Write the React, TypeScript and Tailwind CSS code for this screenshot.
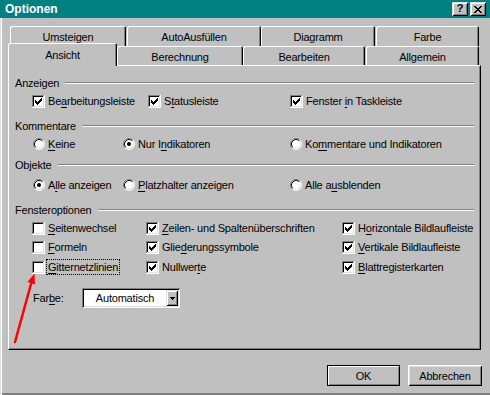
import React from "react";

function U({ children }: { children: React.ReactNode }) {
  return <span className="underline decoration-1 underline-offset-2">{children}</span>;
}

function Check({ checked }: { checked?: boolean }) {
  return (
    <svg width="13" height="13" className="shrink-0" shapeRendering="crispEdges">
      <rect x="0" y="0" width="13" height="13" fill="#fff" />
      <rect x="0" y="0" width="12" height="1" fill="#808080" />
      <rect x="0" y="0" width="1" height="12" fill="#808080" />
      <rect x="1" y="1" width="10" height="1" fill="#000" />
      <rect x="1" y="1" width="1" height="10" fill="#000" />
      <rect x="1" y="11" width="11" height="1" fill="#dfdfdf" />
      <rect x="11" y="1" width="1" height="11" fill="#dfdfdf" />
      {checked && (
        <g fill="#000">
          <rect x="9" y="3" width="1" height="1" />
          <rect x="8" y="4" width="2" height="1" />
          <rect x="3" y="5" width="1" height="1" />
          <rect x="7" y="5" width="3" height="1" />
          <rect x="3" y="6" width="2" height="1" />
          <rect x="6" y="6" width="3" height="1" />
          <rect x="3" y="7" width="5" height="1" />
          <rect x="4" y="8" width="3" height="1" />
          <rect x="5" y="9" width="1" height="1" />
        </g>
      )}
    </svg>
  );
}

function Radio({ checked }: { checked?: boolean }) {
  return (
    <svg width="12" height="12" className="shrink-0">
      <circle cx="6" cy="6" r="5" fill="#fff" />
      <path d="M2.11 9.89 A5.5 5.5 0 0 1 9.89 2.11" stroke="#808080" strokeWidth="1" fill="none" />
      <path d="M9.89 2.11 A5.5 5.5 0 0 1 2.11 9.89" stroke="#fff" strokeWidth="1" fill="none" />
      <path d="M2.82 9.18 A4.5 4.5 0 0 1 9.18 2.82" stroke="#000" strokeWidth="1" fill="none" />
      <path d="M9.18 2.82 A4.5 4.5 0 0 1 2.82 9.18" stroke="#dfdfdf" strokeWidth="1" fill="none" />
      {checked && <circle cx="6" cy="6" r="2" fill="#000" />}
    </svg>
  );
}

function Group({ label, className }: { label: React.ReactNode; className: string }) {
  return (
    <div className={"flex items-center h-[14px] " + className}>
      <span className="whitespace-nowrap">{label}</span>
      <div className="flex-1 ml-[6px] h-[2px] border-t border-t-[#808080] border-b border-b-white" />
    </div>
  );
}

function Tab({ label, className }: { label: string; className: string }) {
  return (
    <div
      className={
        "bg-[#c0c0c0] rounded-t-[2px] shadow-[inset_1px_1px_0_#fff,inset_-1px_0_0_#000,inset_-2px_0_0_#808080] text-center whitespace-nowrap " +
        className
      }
    >
      {label}
    </div>
  );
}

function TitleBtn({ children }: { children: React.ReactNode }) {
  return (
    <div className="w-[16px] h-[14px] bg-[#c0c0c0] shadow-[inset_1px_1px_0_#dfdfdf,inset_-1px_-1px_0_#000,inset_2px_2px_0_#fff,inset_-2px_-2px_0_#808080] flex items-center justify-center">
      {children}
    </div>
  );
}

export default function App() {
  return (
    <div className="relative w-[490px] h-[395px] bg-[#c0c0c0] overflow-hidden text-[11px] leading-[14px] text-black tracking-[-0.2px] flex flex-col [font-family:'Liberation_Sans',Arial,sans-serif] shadow-[inset_1px_0_0_#dfdfdf,inset_2px_0_0_#fff,inset_0_-2px_0_#808080]">
      {/* Title bar */}
      <div className="h-[18px] bg-[#008080] flex items-center shrink-0">
        <span className="ml-[5px] text-white font-bold text-[12px] tracking-[0px]">Optionen</span>
        <div className="ml-auto mr-[4px] flex gap-[2px]">
          <TitleBtn>
            <span className="font-bold text-[11px] leading-[11px] tracking-[0px] -mt-[1px]">?</span>
          </TitleBtn>
          <TitleBtn>
            <svg width="8" height="7" shapeRendering="crispEdges" fill="#000">
              <rect x="0" y="0" width="2" height="1" />
              <rect x="6" y="0" width="2" height="1" />
              <rect x="1" y="1" width="2" height="1" />
              <rect x="5" y="1" width="2" height="1" />
              <rect x="2" y="2" width="4" height="1" />
              <rect x="3" y="3" width="2" height="1" />
              <rect x="2" y="4" width="4" height="1" />
              <rect x="1" y="5" width="2" height="1" />
              <rect x="5" y="5" width="2" height="1" />
              <rect x="0" y="6" width="2" height="1" />
              <rect x="6" y="6" width="2" height="1" />
            </svg>
          </TitleBtn>
        </div>
      </div>

      {/* Tabs row 1 */}
      <div className="flex h-[20px] pl-[10px] mt-[8px]">
        <Tab label="Umsteigen" className="w-[116px] h-[20px] pt-[4px]" />
        <Tab label="AutoAusfüllen" className="ml-[1px] w-[134px] h-[20px] pt-[4px]" />
        <Tab label="Diagramm" className="w-[114px] h-[20px] pt-[4px]" />
        <Tab label="Farbe" className="ml-[1px] w-[103px] h-[20px] pt-[4px]" />
      </div>
      {/* Tabs row 2 */}
      <div className="flex h-[19px] pl-[8px]">
        <Tab label="Ansicht" className="relative z-10 -mt-[3px] w-[109px] h-[23px] pt-[5px]" />
        <Tab label="Berechnung" className="w-[126px] h-[19px] pt-[4px]" />
        <Tab label="Bearbeiten" className="w-[122px] h-[19px] pt-[4px]" />
        <Tab label="Allgemein" className="ml-[1px] w-[113px] h-[19px] pt-[4px]" />
      </div>

      {/* Panel */}
      <div className="ml-[8px] w-[473px] h-[285px] shrink-0 border border-t-white border-l-white border-r-black border-b-black shadow-[inset_-1px_-1px_0_#808080] pl-[6px] pr-[6px] flex flex-col">
        <Group label="Anzeigen" className="mt-[10px]" />
        <div className="mt-[3px] h-[16px] flex items-center pl-[17px]">
          <div className="w-[116px] flex items-center gap-[3px]">
            <Check checked />
            <span className="whitespace-nowrap">Be<U>a</U>rbeitungsleiste</span>
          </div>
          <div className="w-[142px] flex items-center gap-[3px]">
            <Check checked />
            <span className="whitespace-nowrap">S<U>t</U>atusleiste</span>
          </div>
          <div className="flex items-center gap-[3px]">
            <Check checked />
            <span className="whitespace-nowrap">Fenster <U>i</U>n Taskleiste</span>
          </div>
        </div>

        <Group label="Kommentare" className="mt-[10px]" />
        <div className="mt-[3px] h-[16px] flex items-center pl-[18px]">
          <div className="w-[90px] flex items-center gap-[3px]">
            <Radio />
            <span className="whitespace-nowrap"><U>K</U>eine</span>
          </div>
          <div className="w-[167px] flex items-center gap-[3px]">
            <Radio checked />
            <span className="whitespace-nowrap">Nur I<U>n</U>dikatoren</span>
          </div>
          <div className="flex items-center gap-[3px]">
            <Radio />
            <span className="whitespace-nowrap">Ko<U>m</U>mentare und Indikatoren</span>
          </div>
        </div>

        <Group label="Objekte" className="mt-[6px]" />
        <div className="mt-[5px] h-[16px] flex items-center pl-[18px]">
          <div className="w-[90px] flex items-center gap-[3px]">
            <Radio checked />
            <span className="whitespace-nowrap">A<U>l</U>le anzeigen</span>
          </div>
          <div className="w-[167px] flex items-center gap-[3px]">
            <Radio />
            <span className="whitespace-nowrap"><U>P</U>latzhalter anzeigen</span>
          </div>
          <div className="flex items-center gap-[3px]">
            <Radio />
            <span className="whitespace-nowrap">Alle a<U>u</U>sblenden</span>
          </div>
        </div>

        <Group label="Fensteroptionen" className="mt-[10px]" />
        <div className="mt-[3px] h-[16px] flex items-center pl-[17px]">
          <div className="w-[114px] flex items-center gap-[3px]">
            <Check />
            <span className="whitespace-nowrap"><U>S</U>eitenwechsel</span>
          </div>
          <div className="w-[196px] flex items-center gap-[3px]">
            <Check checked />
            <span className="whitespace-nowrap"><U>Z</U>eilen- und Spaltenüberschriften</span>
          </div>
          <div className="flex items-center gap-[3px]">
            <Check checked />
            <span className="whitespace-nowrap">H<U>o</U>rizontale Bildlaufleiste</span>
          </div>
        </div>
        <div className="mt-[3px] h-[16px] flex items-center pl-[17px]">
          <div className="w-[114px] flex items-center gap-[3px]">
            <Check />
            <span className="whitespace-nowrap"><U>F</U>ormeln</span>
          </div>
          <div className="w-[196px] flex items-center gap-[3px]">
            <Check checked />
            <span className="whitespace-nowrap">Glie<U>d</U>erungssymbole</span>
          </div>
          <div className="flex items-center gap-[3px]">
            <Check checked />
            <span className="whitespace-nowrap"><U>V</U>ertikale Bildlaufleiste</span>
          </div>
        </div>
        <div className="mt-[4px] h-[16px] flex items-center pl-[17px]">
          <div className="w-[114px] flex items-center gap-[1px]">
            <Check />
            <span className="whitespace-nowrap h-[16px] leading-[14px] border border-dotted border-black px-[1px]"><U>G</U>itternetzlinien</span>
          </div>
          <div className="w-[196px] flex items-center gap-[3px]">
            <Check checked />
            <span className="whitespace-nowrap">Nullwer<U>t</U>e</span>
          </div>
          <div className="flex items-center gap-[3px]">
            <Check checked />
            <span className="whitespace-nowrap"><U>B</U>lattregisterkarten</span>
          </div>
        </div>

        <div className="mt-[13px] h-[20px] flex items-center pl-[18px]">
          <span className="w-[49px] whitespace-nowrap">Far<U>b</U>e:</span>
          <div className="w-[98px] h-[20px] bg-white flex p-[2px] shadow-[inset_1px_1px_0_#808080,inset_-1px_-1px_0_#fff,inset_2px_2px_0_#000,inset_-2px_-2px_0_#dfdfdf]">
            <div className="flex-1 flex items-center justify-center">Automatisch</div>
            <div className="w-[12px] h-full bg-[#c0c0c0] flex items-center justify-center shadow-[inset_1px_1px_0_#dfdfdf,inset_-1px_-1px_0_#000,inset_2px_2px_0_#fff,inset_-2px_-2px_0_#808080]">
              <svg width="5" height="3" shapeRendering="crispEdges" fill="#000">
                <rect x="0" y="0" width="5" height="1" />
                <rect x="1" y="1" width="3" height="1" />
                <rect x="2" y="2" width="1" height="1" />
              </svg>
            </div>
          </div>
        </div>
      </div>

      {/* Buttons */}
      <div className="flex justify-end gap-[8px] mt-[15px] pr-[8px]">
        <div className="w-[73px] h-[21px] border border-black bg-[#c0c0c0] shadow-[inset_1px_1px_0_#fff,inset_-1px_-1px_0_#808080] flex items-center justify-center">
          OK
        </div>
        <div className="w-[74px] h-[21px] bg-[#c0c0c0] shadow-[inset_1px_1px_0_#fff,inset_-1px_-1px_0_#000,inset_2px_2px_0_#dfdfdf,inset_-2px_-2px_0_#808080] flex items-center justify-center">
          Abbrechen
        </div>
      </div>

      {/* Red arrow annotation */}
      <svg className="absolute left-0 top-0 pointer-events-none" width="490" height="395">
        <line x1="15" y1="342" x2="31" y2="284" stroke="#ff0000" strokeWidth="2.5" strokeLinecap="round" />
        <polygon points="34.5,273.5 27.5,282 35,284.5" fill="#ff0000" />
      </svg>
    </div>
  );
}
